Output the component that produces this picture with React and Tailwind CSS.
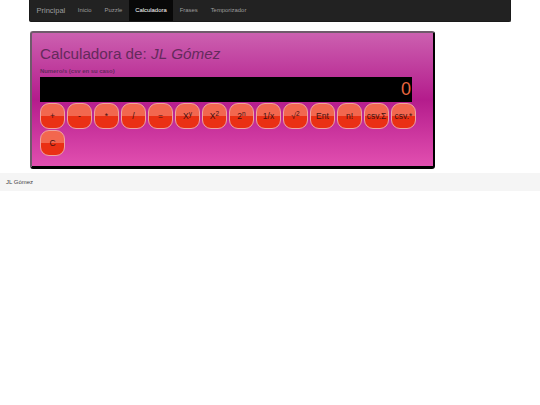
const labels = [
  <>+</>, <>-</>, <>*</>, <>/</>, <>=</>,
  <>X<sup className="text-[6.5px]">y</sup></>, <>X<sup className="text-[6.5px]">2</sup></>, <>2<sup className="text-[6.5px]">n</sup></>,
  <>1/x</>, <>√<sup className="text-[6.5px]">2</sup></>, <>Ent</>, <>n!</>, <>csv.Σ</>, <>csv.*</>, <>C</>,
];

const nav = ["Inicio", "Puzzle", "Calculadora", "Frases", "Temporizador"];

export default function App() {
  return (
    <div className="min-h-[405px] bg-white font-['Liberation_Sans',Arial,sans-serif] text-[#333]">
      <div className="pl-[29px] pr-[29.5px]">
        <nav className="flex h-[22px] items-stretch rounded-b-[2px] border border-t-0 border-[#1a1a1a] bg-[#222222]">
          <span className="ml-[6.5px] mr-[6px] flex items-center text-[7.5px] text-[#9d9d9d]">Principal</span>
          {nav.map((n) => (
            <span
              key={n}
              className={`flex items-center px-[6.5px] text-[5.9px] ${n === "Calculadora" ? "bg-[#080808] text-white" : "text-[#9d9d9d]"}`}
            >
              {n}
            </span>
          ))}
        </nav>
      </div>
      <div className="pl-[30px] pt-[9px]">
        <div className="h-[138px] w-[404.5px] rounded-[3px] border-2 border-[#6f5a6b] border-r-black border-b-[3px] border-b-black bg-[linear-gradient(to_bottom,#cc60b0_0%,#b41c8c_50%,#e24fb0_100%)] pl-[8px] pt-[8px]">
          <h1 className="text-[15.25px] leading-[26px] text-[#642a5c]">
            Calculadora de: <em>JL Gómez</em>
          </h1>
          <label className="mt-[1px] block text-[5.9px] leading-[7px] font-bold text-[#642a5c]">Numero/s (csv en su caso)</label>
          <div className="mt-[2px] flex h-[25px] w-[372px] items-center justify-end bg-black pr-[1px] text-[18px] text-[#e8663f]">
            0
          </div>
          <div className="mt-[1px] flex w-[385px] flex-wrap gap-x-[2px] gap-y-[1px]">
            {labels.map((l, i) => (
              <button
                key={i}
                className="flex h-[26px] w-[25px] items-center justify-center rounded-[9px] border border-[#eda3a0] bg-[linear-gradient(to_bottom,#f2674f_0%,#f2674f_50%,#ea3014_50%,#ea3014_100%)] text-[8.5px] leading-none whitespace-nowrap text-[#3f1210]"
              >
                <span>{l}</span>
              </button>
            ))}
          </div>
        </div>
      </div>
      <footer className="mt-[4px] flex h-[18px] items-center bg-[#f5f5f5] pl-[6px] text-[6px] text-[#444]">JL Gómez</footer>
    </div>
  );
}
